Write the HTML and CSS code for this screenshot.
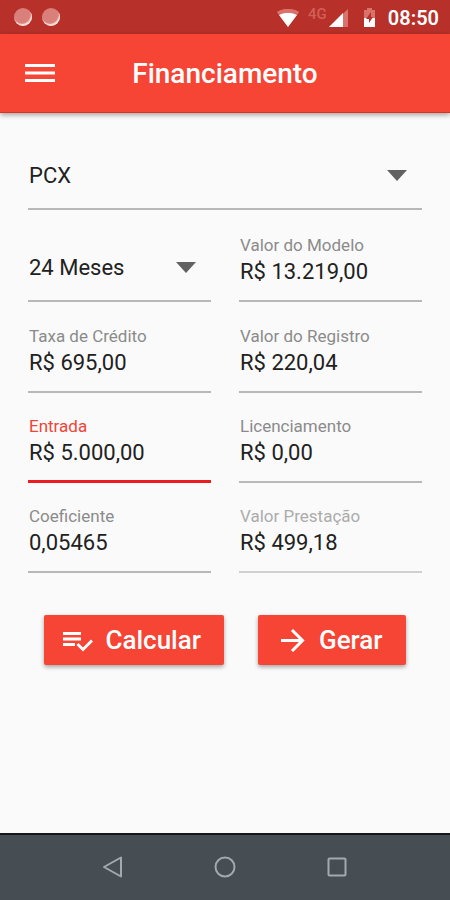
FILE: index.html
```html
<!DOCTYPE html>
<html lang="pt-BR">
<head>
<meta charset="utf-8">
<meta name="viewport" content="width=device-width, initial-scale=1">
<title>Financiamento</title>
<link rel="stylesheet" href="styles.css">
</head>
<body>
<div class="status-bar">
  <span class="dot"></span>
  <span class="dot"></span>
  <svg class="status-icons" width="104" height="26" viewBox="0 0 104 26" aria-hidden="true">
    <path d="M3 8C9 4 19 4 25 8L14 23Z" fill="#d9726b"/>
    <path d="M5 11C9 8 19 8 23 11L14 23Z" fill="#fff"/>
    <path d="M3 8C9 4 19 4 25 8L23 11C18 8 10 8 5 11Z" fill="#d9726b"/>
    <text class="network" x="34" y="15">4G</text>
    <path d="M74 5V23H55Z" fill="#d9726b"/>
    <path d="M69 9V23H55Z" fill="#fff"/>
    <path d="M93 4H98V6H101V23H90V6H93Z" fill="#d9726b"/>
    <path d="M90 14H101V23H90Z" fill="#fff"/>
    <path d="M97 8L92 15H95V19L99 13H97Z" fill="#b73029"/>
  </svg>
  <span class="clock">08:50</span>
</div>
<header class="app-bar">
  <button class="menu" type="button" aria-label="Menu">
    <svg width="30" height="20" viewBox="0 0 30 20"><path d="M0 2.5H30M0 10H30M0 17.5H30" stroke="#fff" stroke-width="3"/></svg>
  </button>
  <h1 class="title">Financiamento</h1>
</header>
<main class="content">
  <form class="form">
    <div class="fields">
      <div class="field field-select wide">
        <select class="value" aria-label="Modelo"><option>PCX</option></select>
        <svg class="arrow" width="20" height="11" viewBox="0 0 20 11"><path d="M0 0H20L10 11Z" fill="#616161"/></svg>
      </div>
      <div class="field field-select">
        <select class="value" aria-label="Prazo"><option>24 Meses</option></select>
        <svg class="arrow" width="20" height="11" viewBox="0 0 20 11"><path d="M0 0H20L10 11Z" fill="#616161"/></svg>
      </div>
      <div class="field">
        <label class="label" for="modelo">Valor do Modelo</label>
        <input class="value" id="modelo" value="R$ 13.219,00">
      </div>
      <div class="field">
        <label class="label" for="taxa">Taxa de Crédito</label>
        <input class="value" id="taxa" value="R$ 695,00">
      </div>
      <div class="field">
        <label class="label" for="registro">Valor do Registro</label>
        <input class="value" id="registro" value="R$ 220,04">
      </div>
      <div class="field active">
        <label class="label" for="entrada">Entrada</label>
        <input class="value" id="entrada" value="R$ 5.000,00">
      </div>
      <div class="field">
        <label class="label" for="licenciamento">Licenciamento</label>
        <input class="value" id="licenciamento" value="R$ 0,00">
      </div>
      <div class="field">
        <label class="label" for="coeficiente">Coeficiente</label>
        <input class="value" id="coeficiente" value="0,05465">
      </div>
      <div class="field readonly">
        <label class="label" for="prestacao">Valor Prestação</label>
        <input class="value" id="prestacao" value="R$ 499,18" readonly>
      </div>
    </div>
    <div class="actions">
      <button class="button" type="button">
        <svg width="30" height="24" viewBox="0 0 30 24" fill="none" stroke="#fff" stroke-width="3"><path d="M0 5.5H18M0 11H18M0 16.5H12M14.500 16L20 21.500L29 12.500"/></svg>
        Calcular
      </button>
      <button class="button" type="button">
        <svg width="30" height="24" viewBox="0 0 30 24" fill="none" stroke="#fff" stroke-width="3"><path d="M4 12.500H25M15 2L25.500 12.500L15 23"/></svg>
        Gerar
      </button>
    </div>
  </form>
</main>
<nav class="nav-bar" aria-label="Sistema">
  <button class="nav-button" type="button" aria-label="Voltar">
    <svg width="24" height="24" viewBox="0 0 24 24"><path d="M20 2.500V21.500L3 12Z"/></svg>
  </button>
  <button class="nav-button" type="button" aria-label="Início">
    <svg width="24" height="24" viewBox="0 0 24 24"><circle cx="12" cy="12" r="9.500"/></svg>
  </button>
  <button class="nav-button" type="button" aria-label="Recentes">
    <svg width="24" height="24" viewBox="0 0 24 24"><rect x="3.500" y="3.500" width="17" height="17" rx="1"/></svg>
  </button>
</nav>
</body>
</html>
```
FILE: styles.css
```css
* {
  box-sizing: border-box;
}

body {
  margin: 0;
  min-height: 100vh;
  display: flex;
  flex-direction: column;
  background: #fafafa;
  color: #212121;
  font-family: Roboto, sans-serif;
}

button {
  border: 0;
  padding: 0;
  background: none;
  font-family: inherit;
}

svg {
  display: block;
  flex: none;
}

.status-bar {
  display: flex;
  align-items: center;
  height: 34px;
  padding: 0 11px 0 14px;
  gap: 10px;
  background: #b73029;
  color: #fff;
}

.dot {
  width: 18px;
  height: 18px;
  border-radius: 50%;
  background: #d9807a;
  box-shadow: inset -1px -2px 1px #fbe0dc;
}

.status-icons {
  margin-left: auto;
}

.network {
  font-size: 15px;
  font-weight: 500;
  fill: #d15f58;
}

.clock {
  padding-top: 2px;
  font-size: 20px;
  font-weight: 600;
}

.app-bar {
  display: grid;
  grid-template-columns: 30px 1fr 30px;
  align-items: center;
  height: 79px;
  padding: 0 25px;
  background: #f64435;
  border-bottom: 1px solid #dc3023;
  box-shadow: 0 2px 5px rgba(0, 0, 0, 0.35);
  color: #fff;
}

.title {
  margin: 0;
  padding-top: 2px;
  font-size: 28px;
  font-weight: 500;
  line-height: 32px;
  text-align: center;
}

.content {
  flex: 1;
  padding: 0 28px;
}

.fields {
  display: grid;
  grid-template-columns: 1fr 1fr;
  grid-template-rows: 97px 92px 91px 90px 90px;
  column-gap: 28px;
}

.field {
  display: flex;
  flex-direction: column;
  justify-content: flex-end;
  min-width: 0;
  padding: 0 0 15px 1px;
  border-bottom: 2px solid #b8b8b8;
}

.wide {
  grid-column: 1 / -1;
}

.field-select {
  position: relative;
  padding-bottom: 19px;
}

.arrow {
  position: absolute;
  right: 15px;
  bottom: 27px;
  pointer-events: none;
}

.label {
  color: #8b8b8b;
  font-size: 17px;
  line-height: 28px;
}

.value {
  width: 100%;
  height: 26px;
  margin: 0;
  padding: 0;
  border: 0;
  outline: 0;
  appearance: none;
  background: none;
  color: inherit;
  font-family: inherit;
  font-size: 22px;
  line-height: 26px;
}

.active {
  padding-bottom: 14px;
  border-bottom: 3px solid #ec1c1f;
}

.active .label {
  color: #f04438;
}

.readonly {
  border-bottom-color: #d0d0d0;
}

.readonly .label {
  color: #acacac;
}

.actions {
  display: flex;
  justify-content: center;
  gap: 34px;
  margin-top: 42px;
}

.button {
  display: flex;
  align-items: center;
  gap: 12px;
  height: 50px;
  padding: 0 23px 0 19px;
  border-radius: 2px;
  background: #f64435;
  box-shadow: 0 2px 4px rgba(0, 0, 0, 0.35);
  color: #fff;
  font-size: 26px;
  font-weight: 500;
}

.nav-bar {
  display: flex;
  justify-content: center;
  gap: 88px;
  height: 67px;
  padding-bottom: 2px;
  border-top: 2px solid #15181a;
  background: #464d53;
}

.nav-button svg {
  fill: none;
  stroke: #a4a9ac;
  stroke-width: 2;
  stroke-linejoin: round;
}
```
